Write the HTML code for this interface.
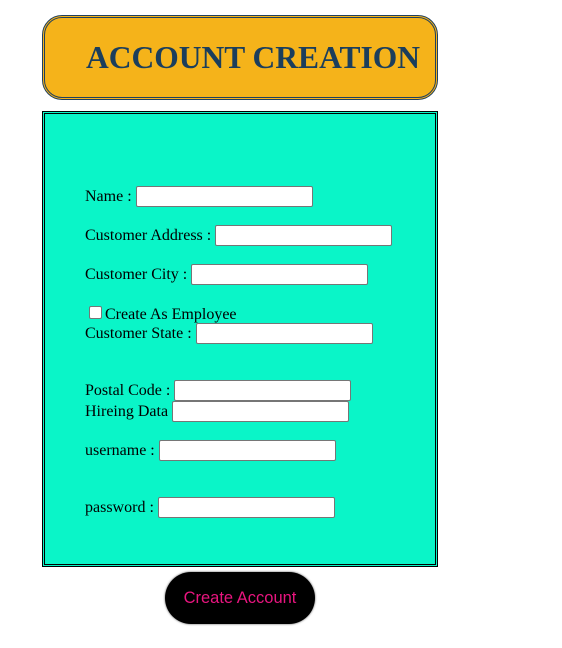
<!DOCTYPE html>
<html><head><style>
body{margin:0;width:562px;height:648px;background:#fff;position:relative;font-family:"Liberation Serif",serif;font-size:16px;color:#000}
.hdr{position:absolute;left:42px;top:15px;width:390px;height:79px;border:3px double #1f3f5f;border-radius:20px;background:#f5b31a}
.hdr span{position:absolute;left:41px;top:22px;font-weight:bold;font-size:31.5px;color:#1b3e5c;line-height:36px;white-space:nowrap}
.box{position:absolute;left:42px;top:111px;width:390px;height:450px;border:3px double #000;background:#0af5c8}
.l{position:absolute;left:85px;line-height:21px;white-space:nowrap}
.i{position:absolute;height:19px;width:175px;border:1px solid #767676;border-radius:2px;background:#fff}
.cb{position:absolute;left:89px;top:306px;width:11px;height:11px;border:1px solid #767676;border-radius:2px;background:#fff}
.btn{position:absolute;left:165px;top:572px;width:150px;height:52px;border-radius:26px;background:#000;box-shadow:0 0 2px #555;color:#e8157f;font-family:"Liberation Sans",sans-serif;font-size:16.5px;line-height:52px;text-align:center}
</style></head><body>
<div class="hdr"><span>ACCOUNT CREATION</span></div>
<div class="box"></div>
<div class="l" style="top:186px">Name :</div><div class="i" style="left:136px;top:186px"></div>
<div class="l" style="top:225px">Customer Address :</div><div class="i" style="left:215px;top:225px"></div>
<div class="l" style="top:264px">Customer City :</div><div class="i" style="left:191px;top:264px"></div>
<div class="cb"></div><div class="l" style="left:105px;top:304px">Create As Employee</div>
<div class="l" style="top:323px">Customer State :</div><div class="i" style="left:196px;top:323px"></div>
<div class="l" style="top:380px">Postal Code :</div><div class="i" style="left:174px;top:380px"></div>
<div class="l" style="top:401px">Hireing Data</div><div class="i" style="left:172px;top:401px"></div>
<div class="l" style="top:440px">username :</div><div class="i" style="left:159px;top:440px"></div>
<div class="l" style="top:497px">password :</div><div class="i" style="left:158px;top:497px"></div>
<div class="btn">Create Account</div>
</body></html>
